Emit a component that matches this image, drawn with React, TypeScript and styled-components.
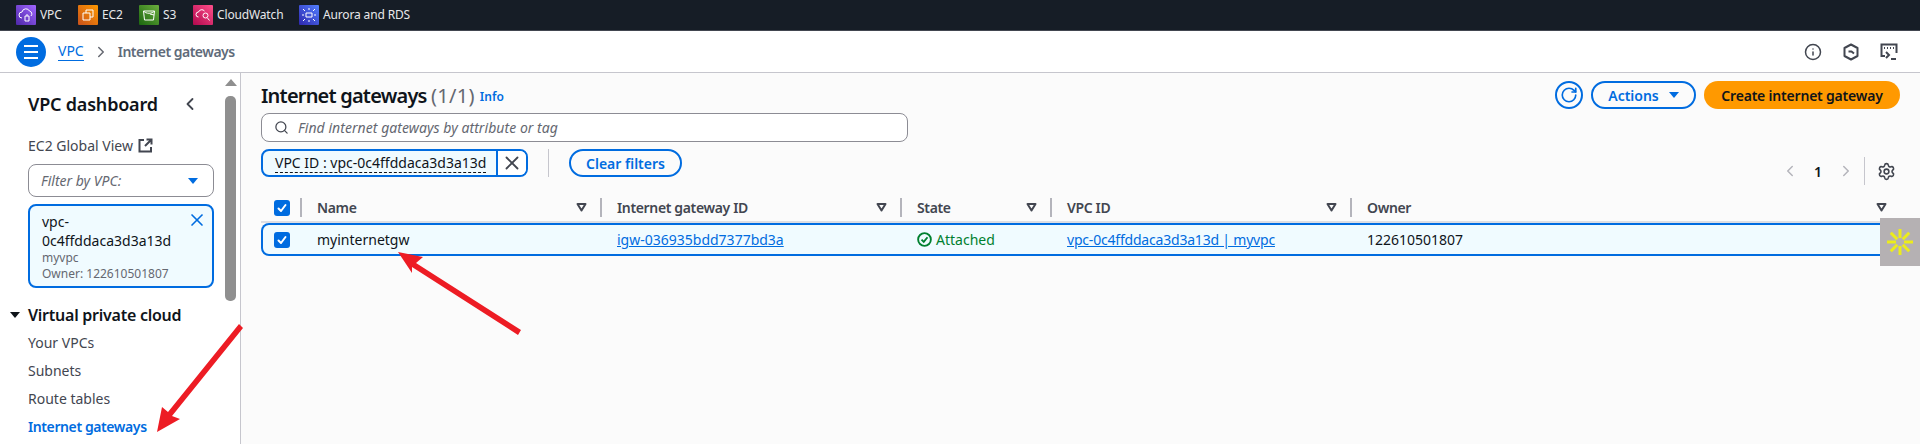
import React from "react";
import styled, { createGlobalStyle } from "styled-components";
import { Search, X, ChevronLeft, ChevronRight, Settings, Info as InfoIcon, RotateCw } from "lucide-react";

const Global = createGlobalStyle`
  html, body { margin: 0; padding: 0; background: #fff; }
  * { box-sizing: border-box; }
  body { font-family: "Noto Sans", "Open Sans", Arial, sans-serif; color: #0f141a; }
`;

const Page = styled.div`
  position: relative;
  width: 1920px;
  height: 444px;
  overflow: hidden;
  display: flex;
  flex-direction: column;
  font-size: 14px;
`;

const TopBar = styled.div`
  height: 31px;
  flex: none;
  background: #161d26;
  border-bottom: 1px solid #424650;
  display: flex;
  align-items: center;
  padding: 0 0 1px 16px;
`;
const Service = styled.div<{ $w: number }>`
  width: ${(p) => p.$w}px;
  flex: none;
  display: flex;
  align-items: center;
  gap: 4px;
  color: #e8e8ea;
  font-size: 12px;
  letter-spacing: -0.15px;
  white-space: nowrap;
`;
const ServiceIcon = styled.div<{ $from: string; $to: string }>`
  width: 20px;
  height: 20px;
  flex: none;
  border-radius: 1px;
  background: linear-gradient(to top right, ${(p) => p.$from}, ${(p) => p.$to});
  display: flex;
  align-items: center;
  justify-content: center;
`;

const Crumbs = styled.div`
  height: 42px;
  flex: none;
  background: #fff;
  border-bottom: 1px solid #c6c6cd;
  display: flex;
  align-items: center;
  padding: 0 0 0 16px;
`;
const MenuButton = styled.div`
  width: 30px;
  height: 30px;
  border-radius: 50%;
  background: #006ce0;
  display: flex;
  flex-direction: column;
  align-items: center;
  justify-content: center;
  gap: 4px;
  margin-right: 12px;
`;
const MenuLine = styled.span`
  width: 14px;
  height: 2px;
  background: #fff;
`;
const CrumbLink = styled.span`
  color: #006ce0;
  font-size: 14px;
  line-height: 18px;
  border-bottom: 1px solid #006ce0;
`;
const CrumbChevron = styled.span`
  display: flex;
  margin: 0 8px 0 8px;
  color: #656871;
`;
const CrumbCurrent = styled.span`
  color: #5f6b7a;
  font-size: 14px;
  font-weight: 600;
  letter-spacing: -0.5px;
`;
const CrumbTools = styled.div`
  margin-left: auto;
  display: flex;
  align-items: center;
  gap: 20px;
  padding-right: 22px;
  color: #424650;
`;

const Body = styled.div`
  flex: 1;
  display: flex;
  min-height: 0;
`;

const Sidebar = styled.aside`
  width: 241px;
  flex: none;
  background: #fff;
  border-right: 1px solid #c6c6cd;
  display: flex;
`;
const SideContent = styled.div`
  width: 225px;
  flex: none;
  padding: 19px 11px 0 28px;
`;
const SideHead = styled.div`
  height: 24px;
  display: flex;
  align-items: center;
  justify-content: space-between;
  font-size: 18px;
  font-weight: 600;
  letter-spacing: -0.2px;
  padding-right: 14px;
`;
const GlobalView = styled.div`
  margin-top: 19px;
  height: 20px;
  display: flex;
  align-items: center;
  gap: 5px;
  color: #424650;
  font-size: 14px;
`;
const VpcSelect = styled.div`
  margin-top: 9px;
  height: 33px;
  border: 1px solid #8c8c94;
  border-radius: 8px;
  display: flex;
  align-items: center;
  justify-content: space-between;
  padding: 0 15px 0 12px;
  font-style: italic;
  font-size: 14px;
  color: #656871;
`;
const Caret = styled.span<{ $color: string; $size: number }>`
  width: 0;
  height: 0;
  flex: none;
  border-left: ${(p) => p.$size}px solid transparent;
  border-right: ${(p) => p.$size}px solid transparent;
  border-top: ${(p) => Math.round(p.$size * 1.1)}px solid ${(p) => p.$color};
`;
const VpcCard = styled.div`
  position: relative;
  margin-top: 7px;
  height: 84px;
  border: 2px solid #006ce0;
  border-radius: 8px;
  background: #f0fbff;
  padding: 6px 10px 0 12px;
`;
const VpcId = styled.div`
  font-size: 14px;
  line-height: 19px;
  color: #0f141a;
`;
const VpcMeta = styled.div`
  font-size: 12px;
  line-height: 16px;
  color: #656871;
`;
const CardClose = styled.span`
  position: absolute;
  top: 4px;
  right: 5px;
  display: flex;
  color: #006ce0;
`;
const NavGroup = styled.div`
  margin-top: 16px;
  height: 22px;
  position: relative;
  display: flex;
  align-items: center;
  font-size: 16px;
  font-weight: 600;
  letter-spacing: -0.25px;
`;
const NavCaret = styled.span`
  position: absolute;
  left: -18px;
  top: 8px;
  display: flex;
`;
const NavList = styled.div`
  margin-top: 2px;
  display: flex;
  flex-direction: column;
`;
const NavItem = styled.div<{ $active?: boolean }>`
  height: 28px;
  display: flex;
  align-items: center;
  font-size: 14px;
  color: ${(p) => (p.$active ? "#006ce0" : "#424650")};
  font-weight: ${(p) => (p.$active ? 600 : 400)};
  letter-spacing: ${(p) => (p.$active ? "-0.4px" : "0")};
`;
const ScrollRail = styled.div`
  width: 11px;
  flex: none;
  display: flex;
  flex-direction: column;
  align-items: center;
  padding-top: 6px;
`;
const ScrollUp = styled.span`
  width: 0;
  height: 0;
  border-left: 6px solid transparent;
  border-right: 6px solid transparent;
  border-bottom: 7px solid #8f8f8f;
`;
const ScrollThumb = styled.div`
  margin-top: 10px;
  width: 11px;
  height: 205px;
  background: #8f8f8f;
  border-radius: 5px;
`;

const Main = styled.main`
  flex: 1;
  min-width: 0;
  background: #fbfbfb;
  padding: 8px 20px 0 20px;
`;
const TitleRow = styled.div`
  height: 28px;
  display: flex;
  align-items: center;
`;
const Title = styled.h1`
  margin: 0;
  font-size: 20px;
  font-weight: 600;
  letter-spacing: -0.8px;
  color: #0f141a;
`;
const Count = styled.span`
  font-weight: 400;
  letter-spacing: 0.3px;
  color: #656871;
`;
const InfoLink = styled.span`
  margin: 3px 0 0 5px;
  color: #006ce0;
  font-size: 12px;
  font-weight: 600;
`;
const Actions = styled.div`
  margin-left: auto;
  display: flex;
  align-items: center;
  gap: 8px;
`;
const IconRound = styled.div`
  width: 28px;
  height: 28px;
  border: 2px solid #006ce0;
  border-radius: 50%;
  color: #006ce0;
  display: flex;
  align-items: center;
  justify-content: center;
`;
const OutlineButton = styled.div<{ $w: number }>`
  width: ${(p) => p.$w}px;
  height: 28px;
  border: 2px solid #006ce0;
  border-radius: 14px;
  color: #006ce0;
  font-size: 14px;
  font-weight: 600;
  display: flex;
  align-items: center;
  justify-content: center;
  gap: 10px;
`;
const PrimaryButton = styled.div`
  width: 196px;
  height: 28px;
  border-radius: 14px;
  background: #ff9900;
  color: #0f141a;
  font-size: 14px;
  font-weight: 600;
  letter-spacing: -0.2px;
  display: flex;
  align-items: center;
  justify-content: center;
`;
const SearchBox = styled.div`
  margin-top: 4px;
  width: 647px;
  height: 29px;
  border: 1px solid #8c8c94;
  border-radius: 8px;
  background: #fff;
  display: flex;
  align-items: center;
  gap: 9px;
  padding: 0 0 0 12px;
  color: #424650;
`;
const SearchText = styled.span`
  font-style: italic;
  font-size: 14px;
  color: #656871;
  letter-spacing: 0.05px;
`;
const FilterRow = styled.div`
  margin-top: 7px;
  height: 36px;
  display: flex;
  align-items: flex-start;
`;
const Token = styled.div`
  width: 267px;
  height: 28px;
  border: 2px solid #006ce0;
  border-radius: 8px;
  background: #f0fbff;
  display: flex;
  overflow: hidden;
`;
const TokenLabel = styled.div`
  flex: 1;
  padding-left: 12px;
  display: flex;
  align-items: center;
  font-size: 14px;
`;
const Dashed = styled.span`
  border-bottom: 1px dashed #0f141a;
  line-height: 18px;
`;
const TokenClose = styled.div`
  width: 30px;
  flex: none;
  border-left: 2px solid #006ce0;
  background: #fff;
  display: flex;
  align-items: center;
  justify-content: center;
  color: #424650;
`;
const VDivider = styled.span`
  width: 1px;
  height: 28px;
  background: #c6c6cd;
  margin: 0 20px 0 20px;
`;
const ClearButton = styled(OutlineButton)``;
const Pager = styled.div`
  margin: 8px 4px 0 auto;
  height: 28px;
  display: flex;
  align-items: center;
  color: #b4b4bb;
`;
const PageNumber = styled.span`
  width: 38px;
  text-align: center;
  font-weight: 600;
  color: #0f141a;
`;
const PagerDivider = styled.span`
  width: 1px;
  height: 28px;
  background: #c6c6cd;
  margin: 0 12px 0 9px;
`;
const Gear = styled.span`
  display: flex;
  color: #424650;
`;
const Columns = styled.div`
  display: grid;
  grid-template-columns: 39px 300px 300px 150px 300px 1fr;
`;
const HeadRow = styled(Columns)`
  margin-top: 9px;
  height: 29px;
  border-bottom: 2px solid #dedee3;
  padding-bottom: 4px;
  padding-top: 4px;
`;
const HeadCell = styled.div`
  display: flex;
  align-items: center;
  justify-content: space-between;
  border-left: 2px solid #b4b4bb;
  padding: 0 13px 0 15px;
  color: #424650;
  font-weight: 600;
  font-size: 14px;
  letter-spacing: -0.35px;
`;
const FilterGlyph = styled.svg`
  flex: none;
`;
const CheckCell = styled.div`
  display: flex;
  align-items: center;
  padding-left: 13px;
`;
const Checkbox = styled.div`
  width: 16px;
  height: 16px;
  border-radius: 3px;
  background: #006ce0;
  display: flex;
  align-items: center;
  justify-content: center;
`;
const DataRow = styled(Columns)`
  height: 33px;
  border-radius: 8px 0 0 8px;
  background: #f0fbff;
  box-shadow: inset 0 0 0 2px #006ce0;
`;
const DataCell = styled.div`
  display: flex;
  align-items: center;
  padding-left: 17px;
  font-size: 14px;
  gap: 4px;
`;
const TableLink = styled.span<{ $tight?: boolean }>`
  color: #006ce0;
  text-decoration: underline;
  letter-spacing: ${(p) => (p.$tight ? "-0.2px" : "0")};
`;
const StatusText = styled.span`
  color: #00802f;
`;

const Badge = styled.div`
  position: absolute;
  right: 0;
  top: 218px;
  width: 40px;
  height: 48px;
  background: #b5b1b3;
  display: flex;
  align-items: center;
  justify-content: center;
`;
const Annotations = styled.svg`
  position: absolute;
  left: 0;
  top: 0;
  pointer-events: none;
`;

const CheckMark = () => (
  <svg width="12" height="12" viewBox="0 0 12 12" fill="none" stroke="#fff" strokeWidth="2" strokeLinecap="round" strokeLinejoin="round">
    <path d="M2.5 6.5 5 9l4.5-6" />
  </svg>
);
const Filter = () => (
  <FilterGlyph width="11" height="9" viewBox="0 0 11 9" fill="none" stroke="#424650" strokeWidth="2" strokeLinejoin="round">
    <path d="M1.5 1h8L5.5 7.5z" />
  </FilterGlyph>
);
const Glyph = ({ d }: { d: string }) => (
  <svg width="16" height="16" viewBox="0 0 16 16" fill="none" stroke="#fff" strokeWidth="1" strokeLinejoin="round">
    <path d={d} />
  </svg>
);

const services = [
  { name: "VPC", w: 62, from: "#4d27a8", to: "#a166ff", d: "M4 11a3 3 0 0 1 0-6 4 4 0 0 1 7.5-1A3 3 0 0 1 13 9M7 9h4v5H7zM9 7v2" },
  { name: "EC2", w: 61, from: "#c8511b", to: "#ff9900", d: "M6 3h7v7h-3M3 6h7v7H3zM6 3v3" },
  { name: "S3", w: 54, from: "#1b660f", to: "#6cae3e", d: "M2.5 4h11l-1 9h-9zM2.5 4c2 3 9 3 11 0M9 7l4 1" },
  { name: "CloudWatch", w: 106, from: "#b0084d", to: "#ff4f8b", d: "M3.5 10a2.5 2.5 0 0 1 0-5 3.5 3.5 0 0 1 6-1M8 8.5a2.5 2.5 0 1 0 5 0 2.5 2.5 0 1 0-5 0M12.5 11l2 2.5" },
  { name: "Aurora and RDS", w: 120, from: "#2e27ad", to: "#527fff", d: "M5 6h6v4H5zM2 2l2 2M14 2l-2 2M2 14l2-2M14 14l-2-2M2 7v2M14 7v2M7 2h2M7 14h2" },
];

export default function App() {
  return (
    <Page>
      <Global />
      <TopBar>
        {services.map((s) => (
          <Service key={s.name} $w={s.w}>
            <ServiceIcon $from={s.from} $to={s.to}>
              <Glyph d={s.d} />
            </ServiceIcon>
            {s.name}
          </Service>
        ))}
      </TopBar>
      <Crumbs>
        <MenuButton>
          <MenuLine />
          <MenuLine />
          <MenuLine />
        </MenuButton>
        <CrumbLink>VPC</CrumbLink>
        <CrumbChevron>
          <ChevronRight size={18} strokeWidth={2} />
        </CrumbChevron>
        <CrumbCurrent>Internet gateways</CrumbCurrent>
        <CrumbTools>
          <InfoIcon size={18} strokeWidth={2} />
          <svg width="18" height="18" viewBox="0 0 18 18" fill="none" stroke="#424650" strokeWidth="2" strokeLinejoin="round">
            <path d="M9 1.5 15.5 5v8L9 16.5 2.5 13V5z" />
            <path d="M6.5 8.5h3l2.5 2" />
          </svg>
          <svg width="18" height="18" viewBox="0 0 18 18" fill="none" stroke="#424650" strokeWidth="2">
            <path d="M5 13H1.5V1.5h15V10" />
            <path d="M4 5h1M7 5h1M10 5h1M13 5h1" />
            <path d="M6 9l3 3-3 3M11 16h5" />
          </svg>
        </CrumbTools>
      </Crumbs>
      <Body>
        <Sidebar>
          <SideContent>
            <SideHead>
              VPC dashboard
              <ChevronLeft size={20} strokeWidth={2.2} color="#424650" />
            </SideHead>
            <GlobalView>
              EC2 Global View
              <svg width="15" height="15" viewBox="0 0 15 15" fill="none" stroke="#424650" strokeWidth="2">
                <path d="M6 2H1.5v11.5H13V9M8.5 1.5h5v5M13.5 1.5 7 8" />
              </svg>
            </GlobalView>
            <VpcSelect>
              Filter by VPC:
              <Caret $color="#006ce0" $size={5} />
            </VpcSelect>
            <VpcCard>
              <VpcId>
                vpc-
                <br />
                0c4ffddaca3d3a13d
              </VpcId>
              <VpcMeta>myvpc</VpcMeta>
              <VpcMeta>Owner: 122610501807</VpcMeta>
              <CardClose>
                <X size={20} strokeWidth={2} />
              </CardClose>
            </VpcCard>
            <NavGroup>
              <NavCaret>
                <Caret $color="#0f141a" $size={5} />
              </NavCaret>
              Virtual private cloud
            </NavGroup>
            <NavList>
              <NavItem>Your VPCs</NavItem>
              <NavItem>Subnets</NavItem>
              <NavItem>Route tables</NavItem>
              <NavItem $active>Internet gateways</NavItem>
            </NavList>
          </SideContent>
          <ScrollRail>
            <ScrollUp />
            <ScrollThumb />
          </ScrollRail>
        </Sidebar>
        <Main>
          <TitleRow>
            <Title>
              Internet gateways <Count>(1/1)</Count>
            </Title>
            <InfoLink>Info</InfoLink>
            <Actions>
              <IconRound>
                <RotateCw size={18} strokeWidth={2.2} />
              </IconRound>
              <OutlineButton $w={105}>
                Actions
                <Caret $color="#006ce0" $size={5} />
              </OutlineButton>
              <PrimaryButton>Create internet gateway</PrimaryButton>
            </Actions>
          </TitleRow>
          <SearchBox>
            <Search size={15} strokeWidth={2} />
            <SearchText>Find internet gateways by attribute or tag</SearchText>
          </SearchBox>
          <FilterRow>
            <Token>
              <TokenLabel>
                <Dashed>VPC ID : vpc-0c4ffddaca3d3a13d</Dashed>
              </TokenLabel>
              <TokenClose>
                <X size={22} strokeWidth={2} />
              </TokenClose>
            </Token>
            <VDivider />
            <ClearButton $w={113}>Clear filters</ClearButton>
            <Pager>
              <ChevronLeft size={18} strokeWidth={2} />
              <PageNumber>1</PageNumber>
              <ChevronRight size={18} strokeWidth={2} />
              <PagerDivider />
              <Gear>
                <Settings size={19} strokeWidth={2} />
              </Gear>
            </Pager>
          </FilterRow>
          <HeadRow>
            <CheckCell>
              <Checkbox>
                <CheckMark />
              </Checkbox>
            </CheckCell>
            <HeadCell>
              Name
              <Filter />
            </HeadCell>
            <HeadCell>
              Internet gateway ID
              <Filter />
            </HeadCell>
            <HeadCell>
              State
              <Filter />
            </HeadCell>
            <HeadCell>
              VPC ID
              <Filter />
            </HeadCell>
            <HeadCell>
              Owner
              <Filter />
            </HeadCell>
          </HeadRow>
          <DataRow>
            <CheckCell>
              <Checkbox>
                <CheckMark />
              </Checkbox>
            </CheckCell>
            <DataCell>myinternetgw</DataCell>
            <DataCell>
              <TableLink>igw-036935bdd7377bd3a</TableLink>
            </DataCell>
            <DataCell>
              <svg width="15" height="15" viewBox="0 0 16 16" fill="none" stroke="#00802f" strokeWidth="2">
                <circle cx="8" cy="8" r="6.8" />
                <path d="M4.8 8.2 7.2 10.6 11.2 5.6" />
              </svg>
              <StatusText>Attached</StatusText>
            </DataCell>
            <DataCell>
              <TableLink $tight>vpc-0c4ffddaca3d3a13d | myvpc</TableLink>
            </DataCell>
            <DataCell>122610501807</DataCell>
          </DataRow>
        </Main>
      </Body>
      <Badge>
        <svg width="28" height="28" viewBox="0 0 28 28" stroke="#ecec1c" strokeWidth="3">
          <path d="M14 1v9M14 18v9M1 14h9M18 14h9M4.8 4.8l6.4 6.4M16.8 16.8l6.4 6.4M23.2 4.8l-6.4 6.4M11.2 16.8l-6.4 6.4" />
        </svg>
      </Badge>
      <Annotations width="1920" height="444" viewBox="0 0 1920 444">
        <g fill="#ed1c24" stroke="none">
          <polygon points="398,252 423,257 416,263 521,330 518,335 412,267 412,273" />
          <polygon points="157,432 162,407 168,412 239,324 243,328 172,416 180,419" />
        </g>
      </Annotations>
    </Page>
  );
}
